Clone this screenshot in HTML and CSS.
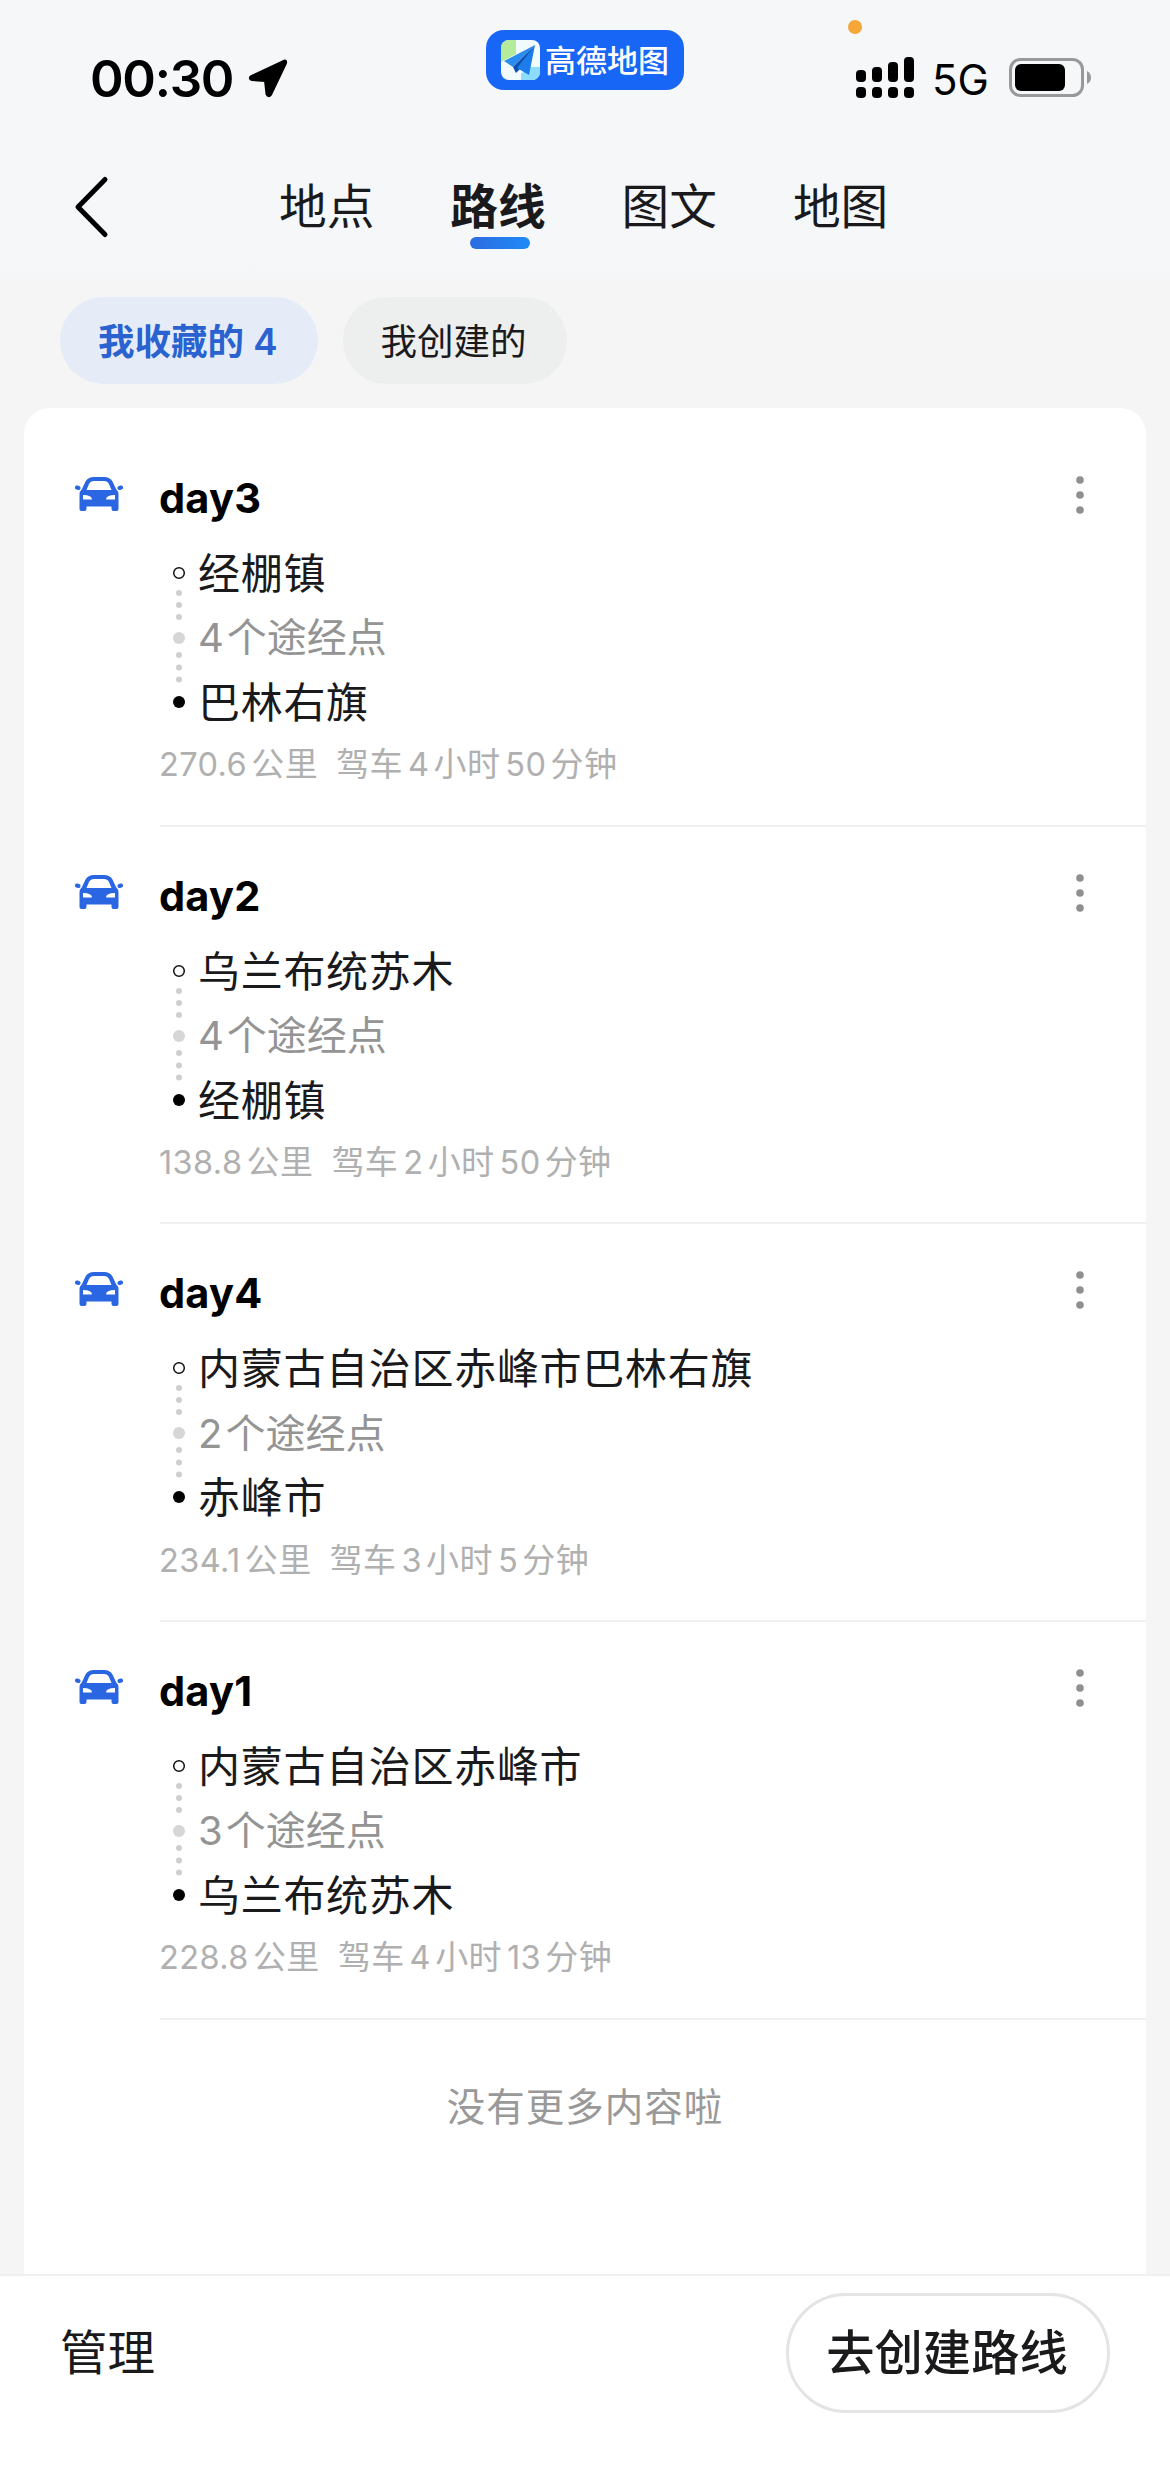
FILE: index.html
```html
<!DOCTYPE html>
<html lang="zh-CN">
<head>
<meta charset="utf-8">
<title>路线</title>
<link rel="stylesheet" href="styles.css">
</head>
<body>
<svg class="sprite" width="0" height="0">
  <symbol id="car" viewBox="0 0 48 34">
    <path fill="currentColor" fill-rule="evenodd" d="M19 0H29Q35 0 37.500 4.500L41 12Q43.500 14 43.500 18V32Q43.500 34 41.500 34H38.500Q36.500 34 36.500 32V29.500H11.500V32Q11.500 34 9.500 34H6.500Q4.500 34 4.500 32V18Q4.500 14 7 12L10.500 4.500Q13 0 19 0ZM19 4Q15.500 4 14 7L11.500 13H36.500L34 7Q32.500 4 29 4ZM8 18V22.500H17Q17 18 8 18ZM40 18V22.500H31Q31 18 40 18Z"/>
    <path stroke="currentColor" stroke-width="4" stroke-linecap="round" d="M2 10.500L3.500 11M46 10.500L44.500 11"/>
  </symbol>
  <symbol id="more" viewBox="0 0 10 40">
    <g fill="#8f8f8f"><circle cx="5" cy="5" r="3.800"/><circle cx="5" cy="20" r="3.800"/><circle cx="5" cy="35" r="3.800"/></g>
  </symbol>
  <symbol id="track" viewBox="0 0 14 144">
    <circle cx="7" cy="8" r="5.300" fill="#fff" stroke="#111" stroke-width="1.500"/>
    <g fill="#cfcfcf"><circle cx="7" cy="28" r="3"/><circle cx="7" cy="40" r="3"/><circle cx="7" cy="52" r="3"/><circle cx="7" cy="90" r="3"/><circle cx="7" cy="102.500" r="3"/><circle cx="7" cy="114.500" r="3"/></g>
    <circle cx="7" cy="73" r="6" fill="#d6d6d6"/>
    <circle cx="7" cy="137" r="6" fill="#000"/>
  </symbol>
</svg>

<header class="status">
  <div class="clock">00:30
    <svg class="locate" width="40" height="40" viewBox="0 0 40 40"><path d="M36.500 3L3.500 18.500Q1 20.500 4 21.500L17.500 22.500L19 36Q20.500 39 22.500 36.500L37.500 5Q38 3 36.500 3Z" fill="#000" stroke="#000" stroke-width="3" stroke-linejoin="round"/></svg>
  </div>
  <div class="brand">
    <svg width="39" height="40" viewBox="0 0 39 40">
      <defs><clipPath id="tile"><rect width="39" height="40" rx="8"/></clipPath></defs>
      <g clip-path="url(#tile)">
        <rect width="39" height="40" fill="#f2fbfb"/>
        <path d="M0 0H15V14L0 22Z" fill="#b5ec9b"/>
        <path d="M20 40V34L28 27H39V40Z" fill="#8edcfb"/>
        <path d="M34 5L3 21L12 27Z" fill="#2b8cf0"/>
        <path d="M34 5L12 27L15 33L19 29Z" fill="#0d4fae"/>
        <path d="M34 5L16 28L28 35Z" fill="#1c7cea"/>
      </g>
    </svg>
    <span>高德地图</span>
  </div>
  <i class="mic-dot"></i>
  <div class="system">
    <svg width="58" height="42" viewBox="0 0 58 42">
      <rect x="0" y="13" width="10" height="12" rx="4"/><rect x="16" y="10" width="10" height="15" rx="4"/><rect x="32" y="5" width="10" height="20" rx="4"/><rect x="48" y="0" width="10" height="25" rx="4"/>
      <rect x="0" y="30" width="10" height="11" rx="4"/><rect x="16" y="30" width="10" height="11" rx="4"/><rect x="32" y="30" width="10" height="11" rx="4"/><rect x="48" y="30" width="10" height="11" rx="4"/>
    </svg>
    <span class="net">5G</span>
    <svg class="battery" width="83" height="40" viewBox="0 0 83 40">
      <rect x="1.500" y="1.500" width="72" height="36" rx="10" fill="none" stroke="#98999b" stroke-width="3"/>
      <rect x="6" y="6" width="50" height="27" rx="6"/>
      <path d="M78 13Q82 15 82 19.500Q82 24 78 26Z" fill="#98999b"/>
    </svg>
  </div>
</header>

<nav class="tabs">
  <svg class="back" width="40" height="66" viewBox="0 0 40 66"><path d="M35 5.500L8 33L35 60.500" fill="none" stroke="#000" stroke-width="5" stroke-linecap="round" stroke-linejoin="round"/></svg>
  <a>地点</a><a class="active">路线</a><a>图文</a><a>地图</a>
</nav>

<div class="chips">
  <span class="chip selected">我收藏的 4</span>
  <span class="chip">我创建的</span>
</div>

<main class="list">
  <article class="route">
    <svg class="car" width="48" height="34"><use href="#car"/></svg>
    <div class="body">
      <div class="head"><h2>day3</h2><svg width="10" height="40"><use href="#more"/></svg></div>
      <div class="stops">
        <svg width="14" height="144"><use href="#track"/></svg>
        <ul><li>经棚镇</li><li class="via"><b>4</b>个途经点</li><li>巴林右旗</li></ul>
      </div>
      <p class="info"><b>270.6</b>公里<i></i>驾车<b>4</b>小时<b>50</b>分钟</p>
    </div>
  </article>
  <article class="route">
    <svg class="car" width="48" height="34"><use href="#car"/></svg>
    <div class="body">
      <div class="head"><h2>day2</h2><svg width="10" height="40"><use href="#more"/></svg></div>
      <div class="stops">
        <svg width="14" height="144"><use href="#track"/></svg>
        <ul><li>乌兰布统苏木</li><li class="via"><b>4</b>个途经点</li><li>经棚镇</li></ul>
      </div>
      <p class="info"><b>138.8</b>公里<i></i>驾车<b>2</b>小时<b>50</b>分钟</p>
    </div>
  </article>
  <article class="route">
    <svg class="car" width="48" height="34"><use href="#car"/></svg>
    <div class="body">
      <div class="head"><h2>day4</h2><svg width="10" height="40"><use href="#more"/></svg></div>
      <div class="stops">
        <svg width="14" height="144"><use href="#track"/></svg>
        <ul><li>内蒙古自治区赤峰市巴林右旗</li><li class="via"><b>2</b>个途经点</li><li>赤峰市</li></ul>
      </div>
      <p class="info"><b>234.1</b>公里<i></i>驾车<b>3</b>小时<b>5</b>分钟</p>
    </div>
  </article>
  <article class="route">
    <svg class="car" width="48" height="34"><use href="#car"/></svg>
    <div class="body">
      <div class="head"><h2>day1</h2><svg width="10" height="40"><use href="#more"/></svg></div>
      <div class="stops">
        <svg width="14" height="144"><use href="#track"/></svg>
        <ul><li>内蒙古自治区赤峰市</li><li class="via"><b>3</b>个途经点</li><li>乌兰布统苏木</li></ul>
      </div>
      <p class="info"><b>228.8</b>公里<i></i>驾车<b>4</b>小时<b>13</b>分钟</p>
    </div>
  </article>
  <p class="end">没有更多内容啦</p>
</main>

<footer class="actions">
  <span class="manage">管理</span>
  <button class="create">去创建路线</button>
</footer>
</body>
</html>
```
FILE: styles.css
```css
* { box-sizing: border-box; margin: 0; padding: 0; }
body {
  width: 1170px;
  height: 2492px;
  display: flex;
  flex-direction: column;
  overflow: hidden;
  position: relative;
  background: linear-gradient(#f5f7f9 0, #f5f7f9 262px, #f5f5f5 290px);
  color: #1a1a1c;
  font-family: Inter, "Noto Sans CJK SC", sans-serif;
}
svg { display: block; flex: none; }
.sprite { position: absolute; }

/* status bar */
.status {
  height: 160px;
  display: grid;
  grid-template-columns: 486px 198px 1fr;
  align-items: start;
}
.clock {
  display: flex;
  gap: 15px;
  margin: 49px 0 0 90px;
  font-size: 51px;
  line-height: 60px;
  font-weight: 600;
  letter-spacing: -1.3px;
  color: #000;
}
.locate { margin-top: 9px; }
.brand {
  height: 60px;
  margin-top: 30px;
  padding-left: 15px;
  display: flex;
  align-items: center;
  gap: 5px;
  border-radius: 18px;
  background: #1766f6;
  color: #fff;
  font-size: 31px;
  font-weight: 500;
  white-space: nowrap;
}
.brand span { margin-top: -4px; }
.mic-dot {
  position: absolute;
  left: 848px;
  top: 20px;
  width: 14px;
  height: 14px;
  border-radius: 50%;
  background: #f6a537;
}
.system { display: flex; margin: 57px 0 0 172px; }
.net {
  width: 95px;
  padding-left: 18px;
  font-size: 42px;
  line-height: 46px;
  color: #000;
}
.battery { margin-top: 1px; }

/* tabs */
.tabs { height: 137px; display: flex; padding-left: 70px; }
.back { margin: 14px 169px 0 0; }
.tabs a {
  width: 96px;
  height: 92px;
  margin-right: 75.3px;
  font-size: 47.7px;
  line-height: 94px;
}
.tabs .active { font-weight: 700; }
.tabs .active::after {
  content: "";
  display: block;
  width: 60px;
  height: 12px;
  margin: -17px 0 0 20px;
  border-radius: 6px;
  background: linear-gradient(90deg, #2c6ce0, #1f8af8);
}

/* filter chips */
.chips { height: 111px; display: flex; gap: 25px; padding-left: 60px; }
.chip {
  height: 87px;
  padding: 0 40px 0 38px;
  border-radius: 44px;
  background: #edeeee;
  font-size: 36.5px;
  line-height: 91px;
  white-space: nowrap;
}
.chip.selected { background: #e6ecf7; color: #2a62d0; font-weight: 600; }

/* route list */
.list {
  height: 1866px;
  margin: 0 24px;
  padding-top: 21px;
  border-radius: 26px 26px 0 0;
  background: #fff;
}
.route { height: 397.7px; display: flex; padding-left: 51px; }
.car { margin: 48px 37px 0 0; color: #2a66e2; }
.body { flex: 1; border-bottom: 2px solid #f0f0f0; }
.head {
  height: 108px;
  display: flex;
  justify-content: space-between;
  padding: 46px 61px 0 0;
}
.head h2 {
  margin: -1px 0 0 -1px;
  font-size: 41.5px;
  line-height: 48px;
  font-weight: 700;
  letter-spacing: .2px;
  color: #000;
}
.stops { display: flex; gap: 12px; padding-left: 12px; }
.stops > svg { margin-top: 28px; }
.stops ul { list-style: none; font-size: 42px; line-height: 64.4px; letter-spacing: .7px; margin-top: 5px; }
.stops .via { font-size: 40px; letter-spacing: 0; color: #949494; }
b { font-weight: 400; margin-right: 3px; }
.info {
  margin: -1px 0 0 -1px;
  font-size: 33px;
  line-height: 60px;
  letter-spacing: .4px;
  color: #b0b0b0;
}
.info b { margin-right: 4.2px; font-size: 32.5px; letter-spacing: .4px; }
.info b:not(:first-child) { margin-left: 5px; }
.info i { display: inline-block; width: 18px; }
.end {
  margin-top: 59px;
  text-align: center;
  font-size: 38.5px;
  line-height: 56px;
  letter-spacing: 1px;
  color: #999;
}

/* bottom bar */
.actions {
  height: 218px;
  display: flex;
  justify-content: space-between;
  align-items: flex-start;
  padding: 17px 60px 0 60px;
  border-top: 2px solid #f0f0f0;
  background: #fff;
}
.manage { font-size: 47.5px; line-height: 119px; }
.create {
  width: 324px;
  height: 120px;
  padding-right: 2px;
  border: 3px solid #e4e4e4;
  border-radius: 60px;
  background: #fff;
  color: #1a1a1c;
  font: 500 48.3px/114px Inter, "Noto Sans CJK SC", sans-serif;
}
```
